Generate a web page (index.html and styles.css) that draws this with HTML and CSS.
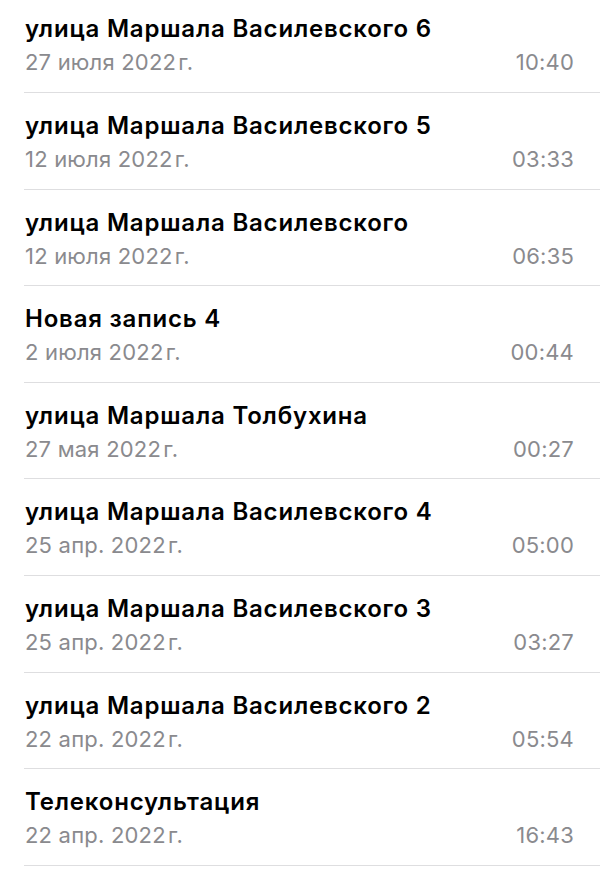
FILE: index.html
```html
<!DOCTYPE html>
<html lang="ru">
<head>
    <meta charset="UTF-8">
    <meta name="viewport" content="width=device-width, initial-scale=1.0">
    <title>Записи</title>
    <link rel="stylesheet" href="styles.css">
</head>
<body>
    <ul class="memos">
        <li class="memo">
            <div class="memo-title">улица Маршала Василевского 6</div>
            <div class="memo-meta"><span>27 июля 2022&#8202;г.</span><span>10:40</span></div>
        </li>
        <li class="memo">
            <div class="memo-title">улица Маршала Василевского 5</div>
            <div class="memo-meta"><span>12 июля 2022&#8202;г.</span><span>03:33</span></div>
        </li>
        <li class="memo">
            <div class="memo-title">улица Маршала Василевского</div>
            <div class="memo-meta"><span>12 июля 2022&#8202;г.</span><span>06:35</span></div>
        </li>
        <li class="memo">
            <div class="memo-title">Новая запись 4</div>
            <div class="memo-meta"><span>2 июля 2022&#8202;г.</span><span>00:44</span></div>
        </li>
        <li class="memo">
            <div class="memo-title">улица Маршала Толбухина</div>
            <div class="memo-meta"><span>27 мая 2022&#8202;г.</span><span>00:27</span></div>
        </li>
        <li class="memo">
            <div class="memo-title">улица Маршала Василевского 4</div>
            <div class="memo-meta"><span>25 апр. 2022&#8202;г.</span><span>05:00</span></div>
        </li>
        <li class="memo">
            <div class="memo-title">улица Маршала Василевского 3</div>
            <div class="memo-meta"><span>25 апр. 2022&#8202;г.</span><span>03:27</span></div>
        </li>
        <li class="memo">
            <div class="memo-title">улица Маршала Василевского 2</div>
            <div class="memo-meta"><span>22 апр. 2022&#8202;г.</span><span>05:54</span></div>
        </li>
        <li class="memo">
            <div class="memo-title">Телеконсультация</div>
            <div class="memo-meta"><span>22 апр. 2022&#8202;г.</span><span>16:43</span></div>
        </li>
    </ul>
</body>
</html>
```

FILE: styles.css
```css
body {
    margin: 0;
    background-color: #fff;
    font-family: 'Inter', 'Noto Sans', sans-serif;
    overflow: hidden;
}
.memos {
    list-style: none;
    margin: -3.6px 0 0;
    padding: 0;
}
.memo {
    box-sizing: border-box;
    height: 96.6px;
    margin-left: 24px;
    padding: 19px 26px 0 1px;
    border-bottom: 1px solid #dedee0;
}
.memo-title {
    font-size: 24px;
    font-weight: 600;
    line-height: 28px;
    letter-spacing: 0.8px;
    color: #000;
}
.memo-meta {
    display: flex;
    justify-content: space-between;
    margin-top: 3px;
    font-size: 22px;
    line-height: 33px;
    letter-spacing: 0.2px;
    color: #8a8a8e;
}
```
